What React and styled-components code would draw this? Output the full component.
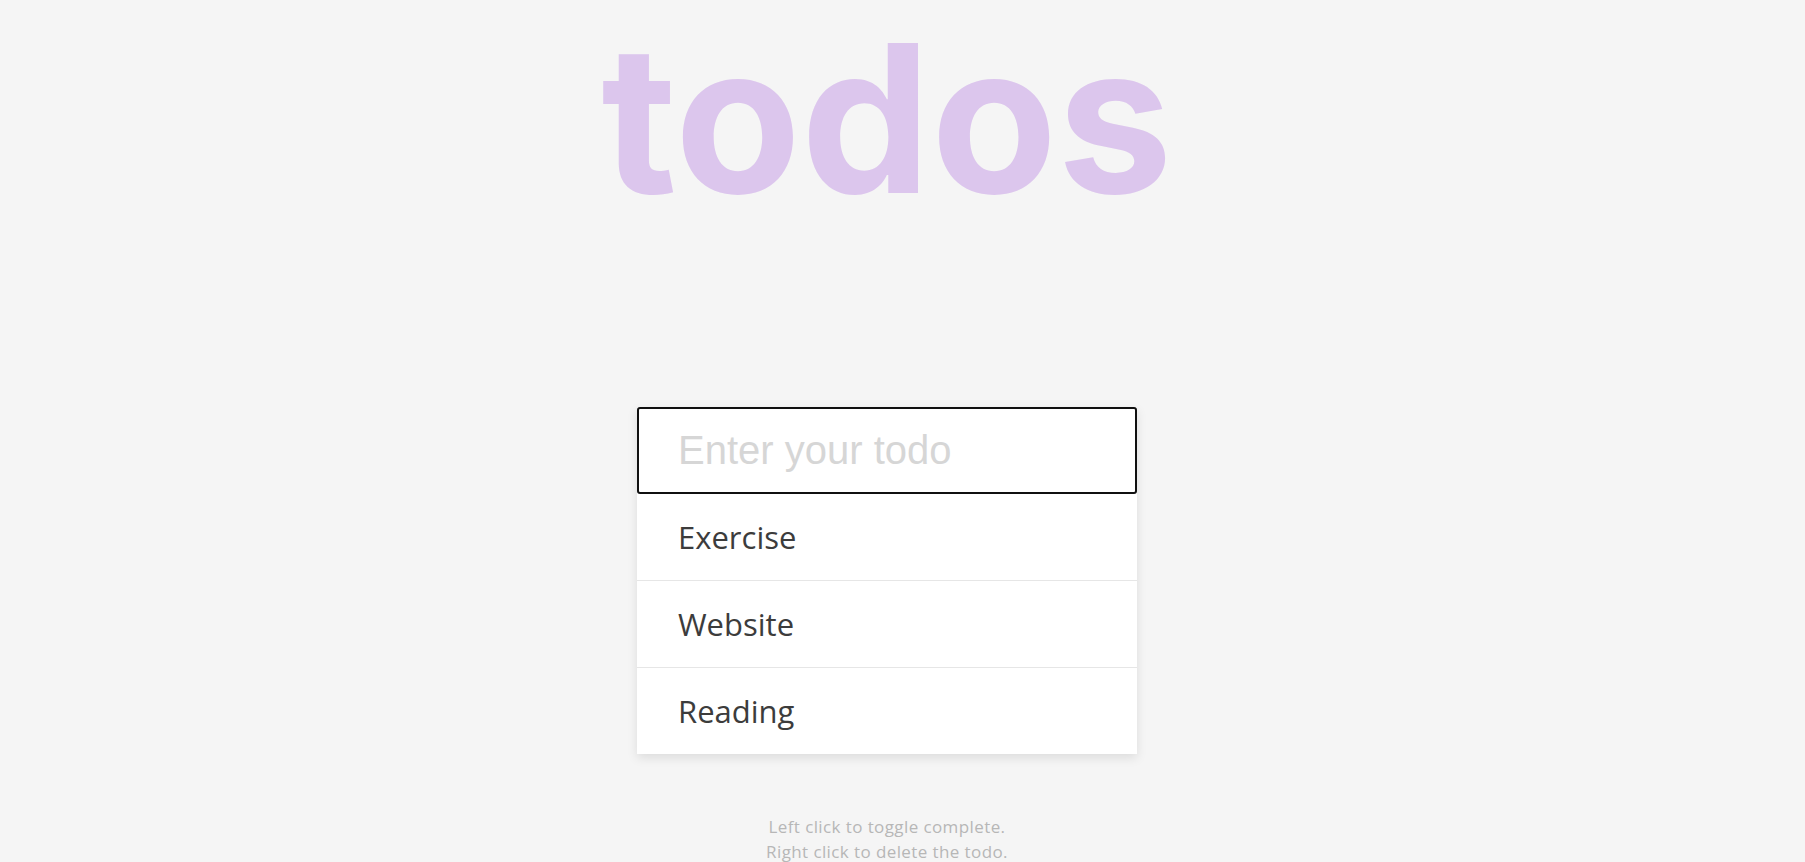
import React, { useState } from 'react';
import styled, { createGlobalStyle } from 'styled-components';

const GlobalStyle = createGlobalStyle`
  html, body {
    margin: 0;
    padding: 0;
    background: #f5f5f5;
  }
  * {
    box-sizing: border-box;
  }
`;

const Page = styled.div`
  display: flex;
  flex-direction: column;
  align-items: center;
  min-height: 100vh;
  padding-right: 31px;
  font-family: 'Open Sans', 'Liberation Sans', sans-serif;
`;

const Title = styled.h1`
  margin: 0;
  padding: 0 10px;
  font-family: 'Inter', 'Open Sans', sans-serif;
  font-size: 206px;
  line-height: 1.15;
  font-weight: 700;
  color: rgb(220, 198, 237);
`;

const Card = styled.form`
  width: 500px;
  margin-top: 170px;
  background: #fff;
  box-shadow: 0 4px 10px rgba(0, 0, 0, 0.1);
`;

const Input = styled.input`
  display: block;
  width: 100%;
  height: 87px;
  padding: 0 39px;
  border: 2px solid #101010;
  border-radius: 3px;
  outline: none;
  background: #fff;
  font-family: 'Liberation Sans', Arial, sans-serif;
  font-size: 40px;
  color: #333;

  &::placeholder {
    color: #d6d6d6;
  }
`;

const List = styled.ul`
  list-style: none;
  margin: 0;
  padding: 0;
`;

const Item = styled.li`
  padding: 20px 41px;
  line-height: 46px;
  font-size: 31px;
  color: #3c3c3c;
  cursor: pointer;
  text-decoration: ${(p) => (p.$done ? 'line-through' : 'none')};
  & + & {
    border-top: 1px solid #e6e6e6;
  }
`;

const Hint = styled.p`
  margin: 60px 0 0;
  text-align: center;
  font-size: 17px;
  line-height: 25px;
  letter-spacing: 0.4px;
  color: #b7b7b7;
`;

export default function App() {
  const [todos, setTodos] = useState([
    { text: 'Exercise', done: false },
    { text: 'Website', done: false },
    { text: 'Reading', done: false },
  ]);
  const [value, setValue] = useState('');

  const submit = (e) => {
    e.preventDefault();
    if (!value.trim()) return;
    setTodos([...todos, { text: value, done: false }]);
    setValue('');
  };

  const toggle = (i) =>
    setTodos(todos.map((t, j) => (j === i ? { ...t, done: !t.done } : t)));

  const remove = (e, i) => {
    e.preventDefault();
    setTodos(todos.filter((_, j) => j !== i));
  };

  return (
    <>
      <GlobalStyle />
      <Page>
        <Title>todos</Title>
        <Card onSubmit={submit}>
          <Input
            autoFocus
            placeholder="Enter your todo"
            value={value}
            onChange={(e) => setValue(e.target.value)}
          />
          <List>
            {todos.map((t, i) => (
              <Item
                key={i}
                $done={t.done}
                onClick={() => toggle(i)}
                onContextMenu={(e) => remove(e, i)}
              >
                {t.text}
              </Item>
            ))}
          </List>
        </Card>
        <Hint>
          Left click to toggle complete.
          <br />
          Right click to delete the todo.
        </Hint>
      </Page>
    </>
  );
}
